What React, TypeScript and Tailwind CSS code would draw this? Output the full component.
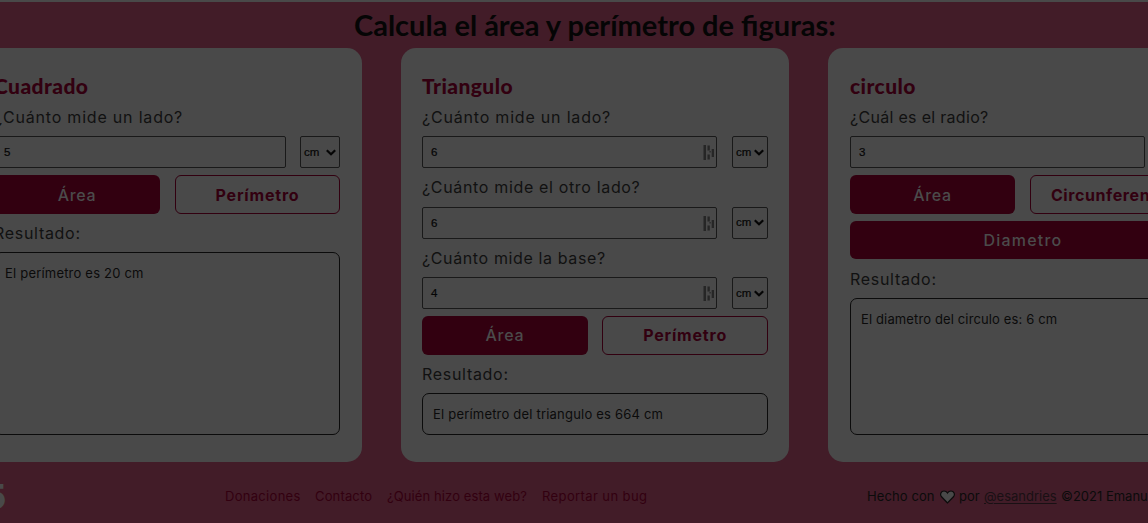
import React from "react";

type Field = { label: string; labelClass: string; value: string; marker?: boolean };

const sans = "font-['Inter',sans-serif]";

function Marker() {
  return (
    <svg className="mr-[1px] mt-[1px] h-[15px] w-[12px]" viewBox="0 0 12 15" fill="#262626">
      <rect x="0.5" y="0" width="2.5" height="15" />
      <rect x="4.5" y="0.5" width="2.3" height="5" />
      <rect x="4.5" y="9.5" width="2.3" height="5" />
      <rect x="8.7" y="4" width="2.3" height="8" />
      <rect x="6.5" y="6" width="1.2" height="1.5" />
    </svg>
  );
}

function Unit({ wide }: { wide?: boolean }) {
  return (
    <div className={`flex h-8 shrink-0 items-center justify-between rounded-[2px] border border-[#191919] pl-[3px] pr-[3px] ${wide ? "w-10" : "w-9"}`}>
      <span className="pt-px font-['Liberation_Sans',sans-serif] text-[11.5px] leading-none text-[#050505] [-webkit-text-stroke:0.2px_#050505]">cm</span>
      <svg className="h-[7px] w-[10px]" viewBox="0 0 10 7" fill="none" stroke="#050505" strokeWidth="2.2">
        <path d="M0.8 1.2 5 5.3 9.2 1.2" />
      </svg>
    </div>
  );
}

function FieldRow({ field, wide, first }: { field: Field; wide?: boolean; first?: boolean }) {
  return (
    <div>
      <div className={`flex items-center whitespace-nowrap text-[16px] text-[#111] ${first ? "h-[37px] pb-[2px]" : "h-[38.5px]"}`}>
        <span className={field.labelClass}>{field.label}</span>
      </div>
      <div className="flex justify-between">
        <div className={`flex h-8 w-[295px] items-center justify-between rounded-[2px] border border-[#191919] ${wide ? "mr-[14px] pl-[9px]" : "mr-[15px] pl-[8px]"}`}>
          <span className="pt-[2px] font-['Liberation_Sans',sans-serif] text-[11.5px] leading-none text-[#050505] [-webkit-text-stroke:0.2px_#050505]">{field.value}</span>
          {field.marker && <Marker />}
        </div>
        <Unit wide={wide} />
      </div>
    </div>
  );
}

const solid = "flex items-center justify-center rounded-[6px] bg-[#320010] text-[#4b4b4b] font-medium";
const outline = "flex items-center justify-center rounded-[6px] border border-[#320010] text-[#320010] font-bold";

type CardProps = {
  title: string;
  fields: Field[];
  second: string;
  secondClass: string;
  extra?: string;
  result: string;
  resultClass: string;
  padClass: string;
  gridClass: string;
  buttonPad: string;
  wide?: boolean;
};

function Card(props: CardProps) {
  return (
    <section className={`flex h-[414px] w-[388px] shrink-0 flex-col rounded-[15px] bg-[#494949] pb-[27px] pt-[26px] ${props.padClass}`}>
      <h2 className="flex h-[25px] items-center whitespace-nowrap pb-[2px] font-['Lato',sans-serif] text-[21px] font-black tracking-[0.42px] text-[#320010]">{props.title}</h2>
      <div className="pb-[7px]">
        {props.fields.map((f, i) => (
          <FieldRow key={f.label} field={f} wide={props.wide} first={i === 0} />
        ))}
      </div>
      <div className={`grid shrink-0 text-[16px] ${props.gridClass}`}>
        <div className={`h-[38.5px] tracking-[0.7px] ${solid} ${props.buttonPad}`}>Área</div>
        <div className={`h-[38.5px] whitespace-nowrap ${outline} ${props.secondClass} ${props.buttonPad}`}>{props.second}</div>
      </div>
      {props.extra && <div className={`mt-[7px] h-[38.5px] shrink-0 text-[16px] tracking-[1.2px] ${solid}`}>{props.extra}</div>}
      <div className={`flex h-[38.5px] shrink-0 items-center text-[16px] tracking-[0.7px] text-[#111] ${props.extra ? "pt-[1px]" : ""}`}>Resultado:</div>
      <div className="flex-1 whitespace-nowrap rounded-[7px] border border-[#0b0b0b] px-[10px] pt-[10px] text-[13px] leading-[20px] text-[#0b0b0b]">
        <span className={props.resultClass}>{props.result}</span>
      </div>
    </section>
  );
}

export default function App() {
  return (
    <div className={`flex h-[523px] w-[1148px] flex-col overflow-hidden border-t-2 border-[#494949] bg-[#421c28] ${sans}`}>
      <h1 className="flex h-[46px] shrink-0 items-center whitespace-nowrap pl-[354px] font-['Lato',sans-serif] text-[29px] font-bold text-[#050505]">
        <span>Calcula el área y perímetro de figuras:</span>
      </h1>
      <main className="-ml-[26px] flex shrink-0 gap-[39px]">
        <Card
          title="Cuadrado" wide padClass="pl-[20px] pr-[22px]" gridClass="grid-cols-[166px_165px] gap-[15px]" buttonPad="pt-[2px]"
          fields={[{ label: "¿Cuánto mide un lado?", labelClass: "tracking-[0.8px]", value: "5" }]}
          second="Perímetro" secondClass="tracking-[0.8px]"
          result="El perímetro es 20 cm" resultClass="tracking-[0.2px]"
        />
        <Card
          title="Triangulo" padClass="px-[21px]" gridClass="grid-cols-2 gap-[14.5px]" buttonPad=""
          fields={[
            { label: "¿Cuánto mide un lado?", labelClass: "tracking-[0.8px]", value: "6", marker: true },
            { label: "¿Cuánto mide el otro lado?", labelClass: "tracking-[0.66px]", value: "6", marker: true },
            { label: "¿Cuánto mide la base?", labelClass: "tracking-[0.62px]", value: "4", marker: true },
          ]}
          second="Perímetro" secondClass="tracking-[0.8px]"
          result="El perímetro del triangulo es 664 cm" resultClass="tracking-[0.2px]"
        />
        <Card
          title="circulo" padClass="pl-[22px] pr-[20px]" gridClass="grid-cols-[165px_166px] gap-[15px]" buttonPad="pt-[2px]"
          fields={[{ label: "¿Cuál es el radio?", labelClass: "tracking-[0.3px]", value: "3" }]}
          second="Circunferencia" secondClass="tracking-[0.6px]" extra="Diametro"
          result="El diametro del circulo es: 6 cm" resultClass="tracking-[0.13px]"
        />
      </main>
      <footer className="flex h-[69px] shrink-0 items-center whitespace-nowrap text-[13px] text-[#320010]">
        <div className="flex w-[225px] shrink-0 items-center">
          <span className="-ml-[16px] text-[34px] font-extrabold leading-none text-[#494949]">5</span>
        </div>
        <span className="w-[90px] shrink-0 tracking-[0.3px]">Donaciones</span>
        <span className="w-[72px] shrink-0 tracking-[0.15px]">Contacto</span>
        <span className="w-[155px] shrink-0 tracking-[0.1px]">¿Quién hizo esta web?</span>
        <span className="w-[325px] shrink-0 tracking-[0.4px]">Reportar un bug</span>
        <span className="w-[73px] shrink-0 tracking-[0.1px] text-[#0b0b0b]">Hecho con</span>
        <svg className="mr-[4px] h-[14px] w-[15px] shrink-0" viewBox="0 0 15 14">
          <path d="M7.5 13 1.3 6.5C-.2 4.5.9 1 4 1c1.7 0 2.9 1 3.5 2C8.1 2 9.3 1 11 1c3.1 0 4.2 3.5 2.7 5.5Z" fill="#494949" stroke="#0c0c0c" strokeWidth="1.2" />
        </svg>
        <span className="w-[25px] shrink-0 text-[#0b0b0b]">por</span>
        <span className="w-[77px] shrink-0 text-[#191014]"><span className="underline underline-offset-2">@esandries</span></span>
        <span className="shrink-0 text-[#0b0b0b]">©2021 Emanuel</span>
      </footer>
    </div>
  );
}
